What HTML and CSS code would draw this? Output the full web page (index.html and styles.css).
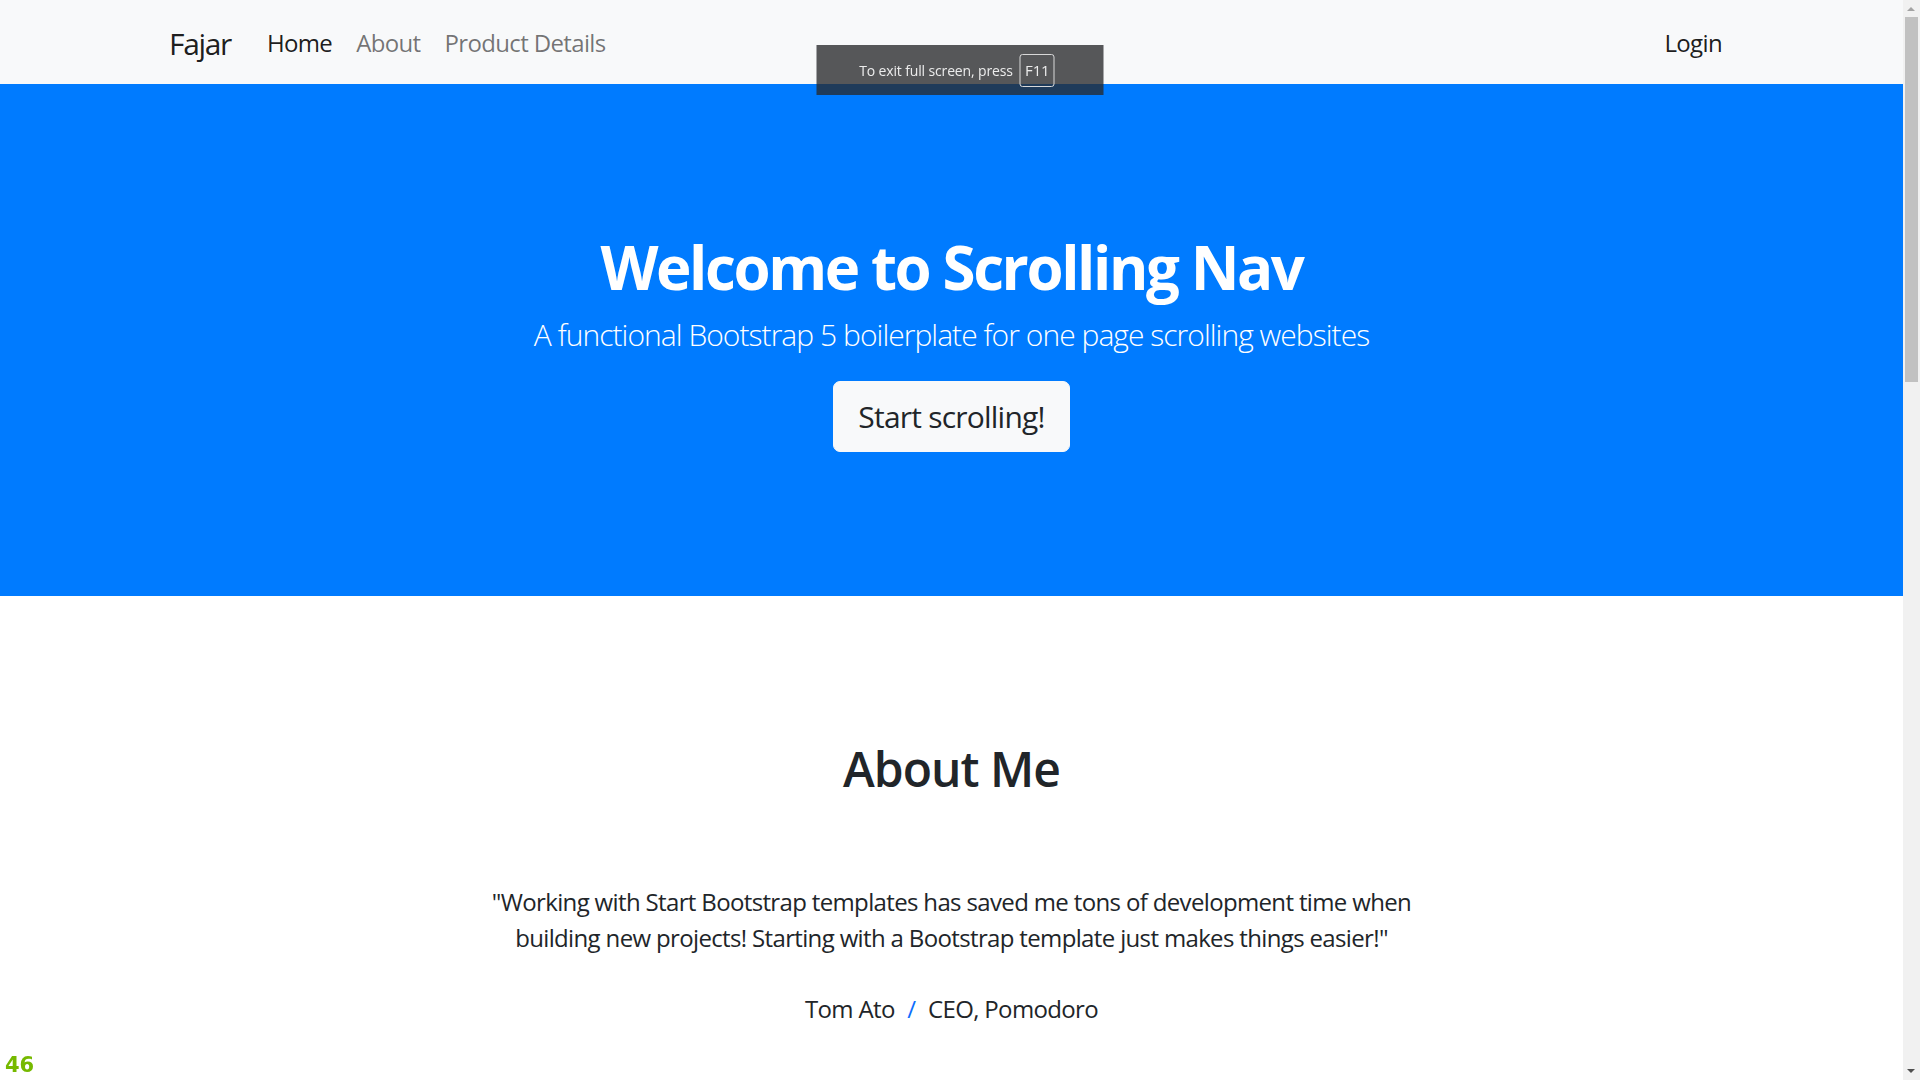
FILE: index.html
```html
<!DOCTYPE html>
<html lang="en">
<head>
<meta charset="utf-8">
<title>Scrolling Nav</title>
<link rel="stylesheet" href="styles.css">
</head>
<body>
<div class="page">
  <nav class="navbar">
    <a class="brand" href="#">Fajar</a>
    <ul class="nav-links">
      <li><a class="nav-link active" href="#">Home</a></li>
      <li><a class="nav-link" href="#">About</a></li>
      <li><a class="nav-link" href="#">Product Details</a></li>
    </ul>
    <a class="nav-link login" href="#">Login</a>
  </nav>

  <header class="hero">
    <h1 class="hero-title">Welcome to Scrolling Nav</h1>
    <p class="hero-lead">A functional Bootstrap 5 boilerplate for one page scrolling websites</p>
    <a class="btn-light" href="#">Start scrolling!</a>
  </header>

  <section class="about">
    <h2 class="about-title">About Me</h2>
    <p class="quote">"Working with Start Bootstrap templates has saved me tons of development time when<br>building new projects! Starting with a Bootstrap template just makes things easier!"</p>
    <div class="author">Tom Ato <span class="sep">/</span> CEO, Pomodoro</div>
  </section>
</div>

<div class="fs-toast">To exit full screen, press <span class="key">F11</span></div>
<div class="fps">46</div>

<div class="scrollbar">
  <span class="arrow-up"></span>
  <span class="thumb"></span>
  <span class="arrow-down"></span>
</div>
</body>
</html>
```

FILE: styles.css
```css
html, body {
  margin: 0;
  padding: 0;
  height: 100%;
  overflow: hidden;
}

body {
  font-family: "Open Sans", "Noto Sans", sans-serif;
  color: #212529;
  background: #ffffff;
}

.page {
  width: 1903px;
}

a { text-decoration: none; }

.navbar {
  height: 84px;
  background: #f8f9fa;
  display: flex;
  align-items: center;
  padding: 2px 169px 0;
  box-sizing: border-box;
}

.brand {
  font-size: 30px;
  color: rgba(0, 0, 0, 0.9);
  margin-right: 24px;
  line-height: 45px;
  letter-spacing: -0.045em;
}

.nav-links {
  list-style: none;
  margin: 0;
  padding: 0;
  display: flex;
  flex: 1;
}

.nav-link {
  display: block;
  font-size: 24px;
  line-height: 36px;
  padding: 12px;
  color: rgba(0, 0, 0, 0.55);
  letter-spacing: -0.027em;
}

.nav-link.active,
.nav-link.login {
  color: rgba(0, 0, 0, 0.9);
}

.hero {
  background: #007bff;
  color: #ffffff;
  text-align: center;
  padding: 147px 0 144px;
}

.hero-title {
  margin: 0 0 9px;
  font-size: 60px;
  line-height: 72px;
  font-weight: 700;
  letter-spacing: -0.04em;
}

.hero-lead {
  margin: 0 0 24px;
  font-size: 30px;
  line-height: 45px;
  font-weight: 300;
  letter-spacing: -0.032em;
}

.btn-light {
  display: inline-block;
  background: #f8f9fa;
  border: 1px solid #f8f9fa;
  color: #212529;
  font-size: 30px;
  line-height: 45px;
  padding: 12px 24px;
  border-radius: 7px;
  letter-spacing: -0.026em;
}

.about {
  text-align: center;
  padding-top: 144px;
}

.about-title {
  margin: 0 0 86px;
  font-size: 48px;
  line-height: 57.6px;
  font-weight: 600;
  letter-spacing: -0.02em;
}

.quote {
  margin: 0 0 35px;
  font-size: 24px;
  line-height: 36px;
  letter-spacing: -0.027em;
}

.author {
  font-size: 24px;
  line-height: 36px;
  letter-spacing: -0.027em;
}

.sep {
  color: #0d6efd;
  margin: 0 7px;
}

.fs-toast {
  position: fixed;
  top: 45px;
  left: 50%;
  transform: translateX(-50%);
  width: 287px;
  height: 50px;
  box-sizing: border-box;
  background: rgba(40, 41, 44, 0.78);
  color: #ececec;
  font-size: 14px;
  letter-spacing: -0.01em;
  display: flex;
  align-items: center;
  justify-content: center;
  gap: 7px;
  padding-right: 6px;
}

.key {
  display: inline-flex;
  align-items: center;
  justify-content: center;
  width: 33px;
  height: 31px;
  border: 1px solid #d8d8d8;
  border-radius: 3px;
  font-size: 15px;
}

.fps {
  position: fixed;
  left: 5px;
  bottom: 3px;
  font-family: "DejaVu Sans", sans-serif;
  font-weight: 700;
  font-size: 21px;
  line-height: 24px;
  color: #76b900;
}

.scrollbar {
  position: fixed;
  top: 0;
  right: 0;
  width: 17px;
  height: 100%;
  background: #f1f1f1;
}

.thumb {
  position: absolute;
  left: 2px;
  top: 17px;
  width: 13px;
  height: 365px;
  background: #c1c1c1;
}

.arrow-up,
.arrow-down {
  position: absolute;
  left: 4px;
  width: 0;
  height: 0;
  border-left: 4px solid transparent;
  border-right: 4px solid transparent;
}

.arrow-up {
  top: 7px;
  border-bottom: 4px solid #a3a3a3;
}

.arrow-down {
  bottom: 7px;
  border-top: 4px solid #505050;
}
```
